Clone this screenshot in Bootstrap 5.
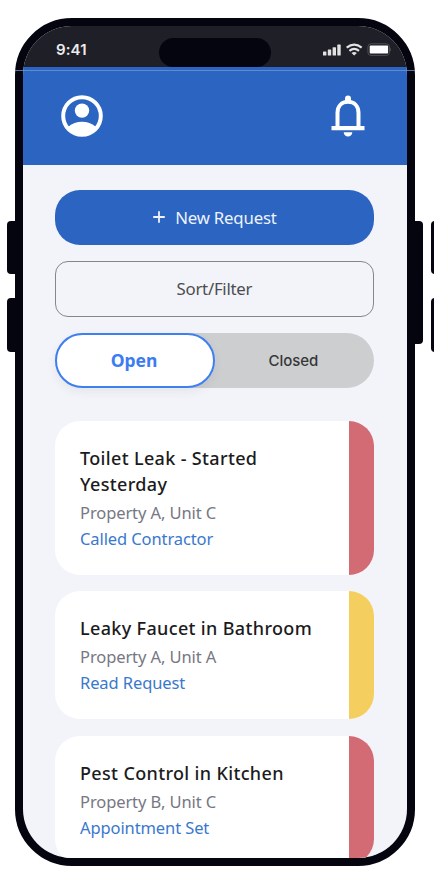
<!DOCTYPE html>
<html lang="en">
<head>
<meta charset="utf-8">
<meta name="viewport" content="width=device-width, initial-scale=1">
<title>Maintenance Requests</title>
<link href="https://cdn.jsdelivr.net/npm/bootstrap@5.3.0/dist/css/bootstrap.min.css" rel="stylesheet">
<style>
body{width:434px;height:884px;font-family:"Noto Sans","Open Sans",sans-serif;background:#fff}
.stage{width:434px;height:884px;padding:17.5px 0 0 14.5px}
.phone{width:400.5px;height:848.5px;border:8px solid #04050e;border-radius:57px;background:#04050e}
.screen{border-radius:49px;background:#f3f4f9}
/* hardware buttons that stick out of the frame */
.key{position:absolute;background:#04050e}
.key-l{left:6.5px;width:10px;border-radius:4px 0 0 4px}
.key-r{left:413px;width:10px;top:220.5px;height:123px;border-radius:0 4px 4px 0}
.key-n{left:431.3px;width:10px;border-radius:4px 0 0 4px}
.k1{top:220.5px;height:53px}
.k2{top:298px;height:54px}
.status{height:41.5px;background:#1f1f27;padding:0 16px 0 33.5px;color:#ececec}
.clock{font:600 15px/1 "Inter",sans-serif;margin-top:7px;letter-spacing:.1px}
.signals{margin-top:8px}
.island{left:136.5px;top:12px;width:111.5px;height:29.5px;border-radius:15px;background:#04050e}
.topbar{height:98px;background:#2b64c1;padding:0 42px 0 38.5px}
.seam{left:14.5px;top:70px;width:400.5px;height:1.3px;background:#7198d6;opacity:.75}
.content{padding:24.7px 33.2px 0 32.5px}
.new-btn{height:55px;background:#2b64c1;color:#eef3fc;border-radius:25px;font-size:16.8px;letter-spacing:-.2px;border:0}
.new-btn:hover{background:#2458ad;color:#fff}
.new-btn svg{margin-right:9px}
.sort-btn{height:56px;margin-top:16.3px;border:1.3px solid #85868a;border-radius:13px;color:#4c4d51;font-size:16.8px;letter-spacing:-.25px}
.toggle{height:55.5px;margin-top:16px;border-radius:28px;background:#cdced0}
.toggle .on{width:160px;border:2px solid #3f80f0;border-radius:28px;background:#fff;color:#3b7cf3;font-weight:700;font-size:17.5px;letter-spacing:-.1px;padding:0 2px 1px 0;box-shadow:0 4px 10px rgba(40,50,80,.07)}
.toggle .off{color:#36373a;font:450 15px/1 "Inter",sans-serif;padding-right:2px}
.requests{margin-top:32.5px;gap:16.4px}
.request{border-radius:25px;background:#fff;flex-shrink:0}
.request .info{padding:25px 0 23.3px 25px}
.request h2{font-size:18px;line-height:25.8px;font-weight:500;color:#1b1b1d;margin:0;letter-spacing:.35px}
.request .place{font-size:16.5px;line-height:27px;color:#777783;margin-top:1px;letter-spacing:-.1px}
.request .state{font-size:16.5px;line-height:26px;color:#3a78cd;letter-spacing:-.1px}
.flag{width:25px;flex:none}
.flag-red{background:#d26b74}
.flag-yellow{background:#f4cf60}
</style>
</head>
<body class="overflow-hidden">
<div class="stage position-relative overflow-hidden">
  <i class="key key-l k1"></i><i class="key key-l k2"></i><i class="key key-r"></i>
  <i class="key key-n k1"></i><i class="key key-n k2"></i>
  <div class="phone position-relative">
    <div class="screen h-100 overflow-hidden d-flex flex-column">
      <div class="status d-flex align-items-center justify-content-between flex-shrink-0 position-relative">
        <div class="clock">9:41</div>
        <div class="island position-absolute"></div>
        <svg class="signals" width="70" height="16" viewBox="0 0 70 16">
          <g fill="#e2e2e3"><rect x="2" y="9.400" width="3.400" height="4.100" rx=".6"/><rect x="6.800" y="7.500" width="3.400" height="6" rx=".6"/><rect x="11.600" y="5.200" width="3.400" height="8.300" rx=".6"/><rect x="16.300" y="2.600" width="3.400" height="10.900" rx=".6"/></g>
          <g fill="none" stroke="#e2e2e3" stroke-width="2.200"><path d="M25.700 5.700Q33.200 -.3 40.700 5.700"/><path d="M28.400 8.800Q33.200 4.900 38 8.800"/></g><path d="M30.500 10.900Q33.200 9 35.900 10.900L33.200 13.500Z" fill="#e2e2e3"/>
          <rect x="46.900" y="1.800" width="21.600" height="11.600" rx="3.200" fill="none" stroke="#4d4d54"/><rect x="48.700" y="3.600" width="18.400" height="7.800" rx="1" fill="#fff"/><path d="M69.200 5.700v3.800q.8-.5.8-1.900t-.8-1.900" fill="#55555b"/>
        </svg>
      </div>
      <header class="topbar d-flex align-items-center justify-content-between flex-shrink-0">
        <svg width="42" height="42" viewBox="0 0 42 42"><circle cx="21" cy="21" r="18.800" fill="none" stroke="#fff" stroke-width="4"/><circle cx="21" cy="15.600" r="7.200" fill="#fff"/><path d="M7.500 31.500Q13 26.800 21 26.800T34.500 31.500L33 36Q28 40.500 21 40.500T9 36Z" fill="#fff"/></svg>
        <svg width="34" height="42" viewBox="0 0 34 42"><path d="M6.500 32V18C6.500 11 10.800 6.800 17 6.800S27.500 11 27.500 18V32" fill="none" stroke="#fff" stroke-width="4"/><path d="M14 7V3.500a3 3 0 0 1 6 0V7Z" fill="#fff"/><path d="M.5 31h33v4.300H.5ZM12.700 37.200h8.600a4.300 4.300 0 0 1-8.600 0Z" fill="#fff"/></svg>
      </header>
      <main class="content">
        <button class="new-btn btn w-100 d-flex align-items-center justify-content-center p-0">
          <svg width="14" height="14" viewBox="0 0 14 14"><path d="M7 1.200v11.600M1.200 7h11.600" stroke="#eef3fc" stroke-width="1.800"/></svg><span>New Request</span>
        </button>
        <button class="sort-btn btn w-100 d-flex align-items-center justify-content-center p-0">Sort/Filter</button>
        <div class="toggle d-flex">
          <div class="on d-flex align-items-center justify-content-center">Open</div>
          <div class="off flex-fill d-flex align-items-center justify-content-center">Closed</div>
        </div>
        <div class="requests d-flex flex-column">
          <article class="request d-flex overflow-hidden">
            <div class="info flex-fill"><h2>Toilet Leak - Started<br>Yesterday</h2><div class="place">Property A, Unit C</div><div class="state">Called Contractor</div></div>
            <div class="flag flag-red"></div>
          </article>
          <article class="request d-flex overflow-hidden">
            <div class="info flex-fill"><h2>Leaky Faucet in Bathroom</h2><div class="place">Property A, Unit A</div><div class="state">Read Request</div></div>
            <div class="flag flag-yellow"></div>
          </article>
          <article class="request d-flex overflow-hidden">
            <div class="info flex-fill"><h2>Pest Control in Kitchen</h2><div class="place">Property B, Unit C</div><div class="state">Appointment Set</div></div>
            <div class="flag flag-red"></div>
          </article>
        </div>
      </main>
    </div>
  </div>
  <div class="seam position-absolute"></div>
</div>
<script src="https://cdn.jsdelivr.net/npm/bootstrap@5.3.0/dist/js/bootstrap.bundle.min.js"></script>
</body>
</html>
